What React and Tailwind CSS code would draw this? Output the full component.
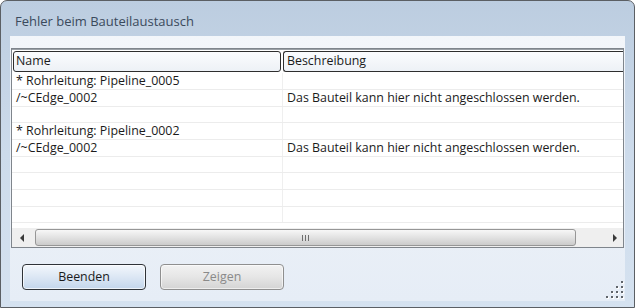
const FONT = { fontFamily: '"Open Sans", "Noto Sans", sans-serif' }

const ROWS = [
  { name: "* Rohrleitung: Pipeline_0005", desc: "", h: "h-[17px]" },
  { name: "/~CEdge_0002", desc: "Das Bauteil kann hier nicht angeschlossen werden.", h: "h-[17px]" },
  { name: "", desc: "", h: "h-[16px]" },
  { name: "* Rohrleitung: Pipeline_0002", desc: "", h: "h-[17px]" },
  { name: "/~CEdge_0002", desc: "Das Bauteil kann hier nicht angeschlossen werden.", h: "h-[17px]" },
  { name: "", desc: "", h: "h-[16px]" },
  { name: "", desc: "", h: "h-[17px]" },
  { name: "", desc: "", h: "h-[17px]" },
  { name: "", desc: "", h: "h-[16px]" },
]

function Arrow({ dir }) {
  return (
    <svg width="5" height="8" viewBox="0 0 5 8">
      {dir === "left" ? <path d="M4 0 L0 4 L4 8 Z" fill="#3a3a3a" /> : <path d="M1 0 L5 4 L1 8 Z" fill="#3a3a3a" />}
    </svg>
  )
}

function Grip() {
  const dots = []
  for (let r = 0; r < 4; r++) {
    for (let c = 0; c <= r; c++) {
      dots.push([15 - c * 5, r * 5])
    }
  }
  return (
    <svg width="18" height="18" viewBox="0 0 18 18">
      {dots.map(([x, y]) => (
        <g key={x + "-" + y}>
          <rect x={x + 1} y={y + 1} width="2" height="2" fill="#ffffff" />
          <rect x={x} y={y} width="2" height="2" fill="#5f646a" />
        </g>
      ))}
    </svg>
  )
}

export default function App() {
  return (
    <div className="w-[635px] h-[308px] text-[12.4px] text-[#1b1b1b] leading-none" style={FONT}>
      <div className="w-full h-full flex flex-col border border-[#5b5f64] rounded-t-[7px] bg-gradient-to-b from-[#bccde0] via-[#cddbeb] to-[#d5e2f0] overflow-hidden">
        <div className="h-[35px] shrink-0 pl-[14px] pt-[12px] text-[13px] leading-[17px] text-[#3b4a5c]">
          Fehler beim Bauteilaustausch
        </div>
        <div className="flex-1 flex px-[9px] pb-[6px]">
          <div className="flex-1 flex flex-col bg-gradient-to-b from-[#f3f6fa] to-[#e6edf6] pt-[12px]">
            <div className="ml-px w-[613px] h-[200px] flex flex-col border border-[#7f858c] bg-white">
              <div className="h-[24px] shrink-0 flex border-t border-[#9aa0a6] pt-px pb-px">
                <div className="w-[268px] ml-px flex items-center px-[2px] border border-[#2e2e2e] rounded-[3px] bg-gradient-to-b from-[#fbfcfe] to-[#edf1f6]">
                  Name
                </div>
                <div className="flex-1 ml-[2px] flex items-center px-[3px] border border-r-0 border-[#2e2e2e] rounded-l-[3px] bg-gradient-to-b from-[#fbfcfe] to-[#edf1f6]">
                  Beschreibung
                </div>
              </div>
              <div className="flex-1 overflow-hidden">
                {ROWS.map((row, i) => (
                  <div key={i} className={"flex border-b border-[#ececec] " + row.h}>
                    <div className="w-[271px] pl-[4px] pt-px flex items-center border-r border-[#efefef] whitespace-nowrap">{row.name}</div>
                    <div className="flex-1 pl-[4px] pt-px flex items-center whitespace-nowrap">{row.desc}</div>
                  </div>
                ))}
              </div>
              <div className="h-[19px] shrink-0 flex items-center bg-[#efefef]">
                <div className="w-[21px] flex justify-center">
                  <Arrow dir="left" />
                </div>
                <div className="w-[2px]" />
                <div className="w-[541px] h-[17px] flex items-center justify-center rounded-[3px] border border-[#969696] bg-gradient-to-b from-[#f7f7f7] via-[#e2e2e2] to-[#cbcbcb]">
                  <div className="flex gap-[2px]">
                    <div className="w-px h-[6px] bg-[#6e6e6e]" />
                    <div className="w-px h-[6px] bg-[#6e6e6e]" />
                    <div className="w-px h-[6px] bg-[#6e6e6e]" />
                  </div>
                </div>
                <div className="flex-1 flex justify-end pr-[6px]">
                  <Arrow dir="right" />
                </div>
              </div>
            </div>
            <div className="flex-1 flex items-end pl-[12px] pr-[1px] pb-[2px]">
              <div className="flex gap-[14px] pb-[9px]">
                <button className="w-[124px] h-[26px] rounded-[4px] border border-[#2f3338] bg-gradient-to-b from-[#f3f7fc] via-[#dce7f4] to-[#c3d6ec] text-[#1b1b1b] shadow-[inset_0_0_0_1px_rgba(255,255,255,0.7)]">
                  Beenden
                </button>
                <button className="w-[124px] h-[26px] rounded-[4px] border border-[#8f8f8f] bg-gradient-to-b from-[#f2f2f2] via-[#e6e6e6] to-[#d4d4d4] text-[#8a8a8a] shadow-[inset_0_0_0_1px_rgba(255,255,255,0.6)]">
                  Zeigen
                </button>
              </div>
              <div className="ml-auto">
                <Grip />
              </div>
            </div>
          </div>
        </div>
      </div>
    </div>
  )
}
